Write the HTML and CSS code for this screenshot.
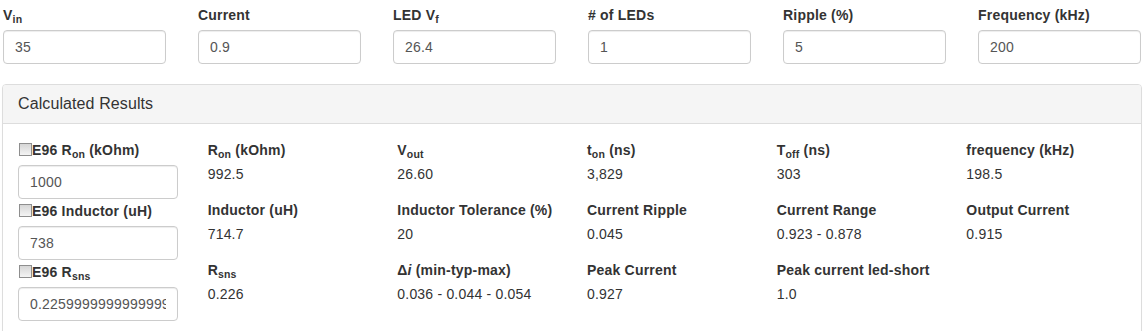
FILE: index.html
```html
<!DOCTYPE html>
<html lang="en">

<head>
  <meta charset="UTF-8" />
  <meta name="viewport" content="width=device-width, initial-scale=1.0" />
  <title>LED Driver Calculator</title>
  <link rel="stylesheet" href="styles.css">
</head>

<body>
  <div class="page">
    <!-- Input parameters -->
    <div class="params">
      <div class="field">
        <label for="vin">V<sub>in</sub></label>
        <input type="text" id="vin" value="35" />
      </div>
      <div class="field">
        <label for="current">Current</label>
        <input type="text" id="current" value="0.9" />
      </div>
      <div class="field">
        <label for="vf">LED V<sub>f</sub></label>
        <input type="text" id="vf" value="26.4" />
      </div>
      <div class="field">
        <label for="leds"># of LEDs</label>
        <input type="text" id="leds" value="1" />
      </div>
      <div class="field">
        <label for="ripple">Ripple (%)</label>
        <input type="text" id="ripple" value="5" />
      </div>
      <div class="field">
        <label for="freq">Frequency (kHz)</label>
        <input type="text" id="freq" value="200" />
      </div>
    </div>

    <div class="panel">
      <div class="panel-heading">Calculated Results</div>
      <div class="panel-body">
        <div class="e96">
          <div class="e96-group">
            <label><input type="checkbox" class="check" />E96 R<sub>on</sub> (kOhm)</label>
            <input type="text" value="1000" />
          </div>
          <div class="e96-group">
            <label><input type="checkbox" class="check" />E96 Inductor (uH)</label>
            <input type="text" value="738" />
          </div>
          <div class="e96-group">
            <label><input type="checkbox" class="check" />E96 R<sub>sns</sub></label>
            <input type="text" value="0.22599999999999998" />
          </div>
        </div>

        <div class="results">
          <div class="result">
            <div class="result-label">R<sub>on</sub> (kOhm)</div>
            <div class="result-value">992.5</div>
          </div>
          <div class="result">
            <div class="result-label">V<sub>out</sub></div>
            <div class="result-value">26.60</div>
          </div>
          <div class="result">
            <div class="result-label">t<sub>on</sub> (ns)</div>
            <div class="result-value">3,829</div>
          </div>
          <div class="result">
            <div class="result-label">T<sub>off</sub> (ns)</div>
            <div class="result-value">303</div>
          </div>
          <div class="result">
            <div class="result-label">frequency (kHz)</div>
            <div class="result-value">198.5</div>
          </div>

          <div class="result">
            <div class="result-label">Inductor (uH)</div>
            <div class="result-value">714.7</div>
          </div>
          <div class="result">
            <div class="result-label">Inductor Tolerance (%)</div>
            <div class="result-value">20</div>
          </div>
          <div class="result">
            <div class="result-label">Current Ripple</div>
            <div class="result-value">0.045</div>
          </div>
          <div class="result">
            <div class="result-label">Current Range</div>
            <div class="result-value">0.923 - 0.878</div>
          </div>
          <div class="result">
            <div class="result-label">Output Current</div>
            <div class="result-value">0.915</div>
          </div>

          <div class="result">
            <div class="result-label">R<sub>sns</sub></div>
            <div class="result-value">0.226</div>
          </div>
          <div class="result">
            <div class="result-label">&Delta;<i>i</i> (min-typ-max)</div>
            <div class="result-value">0.036 - 0.044 - 0.054</div>
          </div>
          <div class="result">
            <div class="result-label">Peak Current</div>
            <div class="result-value">0.927</div>
          </div>
          <div class="result">
            <div class="result-label">Peak current led-short</div>
            <div class="result-value">1.0</div>
          </div>
        </div>
      </div>
    </div>
  </div>
</body>

</html>
```

FILE: styles.css
```css
body {
  margin: 0;
  padding: 0;
  font-family: "Liberation Sans", Arial, sans-serif;
  font-size: 14px;
  line-height: 20px;
  letter-spacing: 0.2px;
  color: #333;
  background: #fff;
}

.page {
  width: 1139px;
  padding: 5px 0 0 3px;
}

sub {
  font-size: 75%;
  line-height: 0;
  position: relative;
  vertical-align: baseline;
  bottom: -0.25em;
}

label {
  display: inline-block;
  font-weight: bold;
  margin-bottom: 5px;
}

input[type="text"] {
  display: block;
  width: 100%;
  height: 34px;
  box-sizing: border-box;
  padding: 6px 11px;
  font-family: inherit;
  font-size: 14px;
  letter-spacing: 0.2px;
  color: #555;
  background: #fff;
  border: 1px solid #ccc;
  border-radius: 4px;
  box-shadow: inset 0 1px 1px rgba(0, 0, 0, 0.075);
}

.params {
  display: grid;
  grid-template-columns: repeat(6, 1fr);
  column-gap: 32px;
  padding-right: 1px;
}

.panel {
  margin-top: 20px;
  margin-left: -1px;
  border: 1px solid #ddd;
  border-radius: 4px;
  box-shadow: 0 1px 1px rgba(0, 0, 0, 0.05);
}

.panel-heading {
  padding: 9px 15px;
  font-size: 16px;
  line-height: 20px;
  letter-spacing: 0.1px;
  background-color: #f5f5f5;
  border-bottom: 1px solid #ddd;
  border-radius: 3px 3px 0 0;
}

.panel-body {
  padding: 16px 15px 20px;
  display: grid;
  grid-template-columns: repeat(6, 1fr);
  column-gap: 30px;
}

.e96-group {
  margin-bottom: 2px;
}

.e96-group label {
  margin-bottom: 5px;
}

.check {
  appearance: none;
  -webkit-appearance: none;
  width: 13px;
  height: 13px;
  margin: 0 0 0 1px;
  vertical-align: -1px;
  border: 1px solid #8e8e8e;
  box-sizing: border-box;
  background: linear-gradient(#d6d6d6, #f4f4f4);
}

.results {
  grid-column: 2 / 7;
  display: grid;
  grid-template-columns: repeat(5, 1fr);
  column-gap: 30px;
  align-content: start;
}

.result {
  margin-bottom: 16px;
}

.result-label {
  font-weight: bold;
  margin-bottom: 4px;
}
```
